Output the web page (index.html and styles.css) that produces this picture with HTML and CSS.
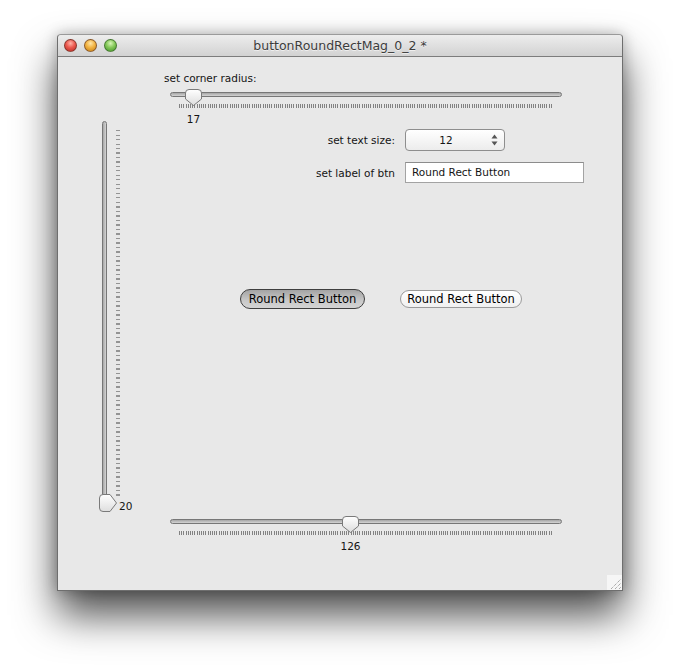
FILE: index.html
```html
<!doctype html>
<html>
    <head>
        <meta charset='utf-8'>
        <title>buttonRoundRectMag_0_2</title>
        <link rel="stylesheet" href="styles.css">
    </head>
    <body>
        <div class="window">
            <div class="titlebar">
                <div class="lights">
                    <span class="light red"></span>
                    <span class="light amber"></span>
                    <span class="light green"></span>
                </div>
                <div class="title">buttonRoundRectMag_0_2 *</div>
                <div></div>
            </div>
            <div class="content">
                <!-- vertical slider, left side -->
                <div class="side">
                    <div class="vslider">
                        <div class="vtrack"></div>
                        <div class="vticks"></div>
                        <div class="vthumb" style="top:373px">
                            <svg width="18" height="18" viewBox="0 0 18 18">
                                <defs>
                                    <linearGradient id="gv" x1="0" y1="0" x2="0" y2="1">
                                        <stop offset="0" stop-color="#ffffff"/>
                                        <stop offset="1" stop-color="#dedede"/>
                                    </linearGradient>
                                </defs>
                                <path d="M4 0.5 H11 L17.5 9 L11 17.5 H4 Q0.5 17.5 0.5 14 V4 Q0.5 0.5 4 0.5 Z" fill="url(#gv)" stroke="#7a7a7a"/>
                            </svg>
                            <span class="vvalue">20</span>
                        </div>
                    </div>
                </div>

                <div class="main">
                    <div class="caption">set corner radius:</div>
                    <div class="hslider">
                        <div class="track"></div>
                        <div class="ticks"></div>
                        <div class="thumb" style="left:15px">
                            <svg width="17" height="17" viewBox="0 0 17 17">
                                <defs>
                                    <linearGradient id="gh" x1="0" y1="0" x2="0" y2="1">
                                        <stop offset="0" stop-color="#ffffff"/>
                                        <stop offset="1" stop-color="#dcdcdc"/>
                                    </linearGradient>
                                </defs>
                                <path d="M0.5 4 Q0.5 0.5 4 0.5 H13 Q16.5 0.5 16.5 4 V10 L8.5 16.5 L0.5 10 Z" fill="url(#gh)" stroke="#7a7a7a"/>
                            </svg>
                            <span class="value">17</span>
                        </div>
                    </div>

                    <div class="form">
                        <label>set text size:</label>
                        <div class="spinner">
                            <span>12</span>
                            <svg width="7" height="12" viewBox="0 0 7 12">
                                <path d="M3.5 0.5 L6.5 4.5 H0.5 Z" fill="#555"/>
                                <path d="M3.5 11.5 L6.5 7.5 H0.5 Z" fill="#555"/>
                            </svg>
                        </div>
                        <label>set label of btn</label>
                        <div class="field">Round Rect Button</div>
                    </div>

                    <div class="buttons">
                        <button class="rr pressed">Round Rect Button</button>
                        <button class="rr plain">Round Rect Button</button>
                    </div>

                    <div class="hslider lower">
                        <div class="track"></div>
                        <div class="ticks"></div>
                        <div class="thumb" style="left:172px">
                            <svg width="17" height="17" viewBox="0 0 17 17">
                                <path d="M0.5 4 Q0.5 0.5 4 0.5 H13 Q16.5 0.5 16.5 4 V10 L8.5 16.5 L0.5 10 Z" fill="url(#gh)" stroke="#7a7a7a"/>
                            </svg>
                            <span class="value">126</span>
                        </div>
                    </div>
                </div>

                <div class="grip">
                    <svg width="15" height="15" viewBox="0 0 15 15">
                        <path d="M4 14 L14 4 M8 14 L14 8 M12 14 L14 12" stroke="#8a8a8a" stroke-width="1" stroke-dasharray="1 1"/>
                    </svg>
                </div>
            </div>
        </div>
    </body>
</html>
```

FILE: styles.css
```css
html, body {
    margin: 0;
    padding: 0;
}
body {
    min-height: 670px;
    background: #fff;
    font-family: 'DejaVu Sans', 'Liberation Sans', sans-serif;
    font-size: 10.5px;
    color: #141414;
}
.window {
    width: 564px;
    margin: 34px 0 0 57px;
    border: 1px solid #6e6e6e;
    border-top-color: #9a9a9a;
    border-radius: 4px 4px 0 0;
    background: #e8e8e8;
    box-shadow: 0 24px 42px rgba(0, 0, 0, 0.7), 0 0 14px rgba(0, 0, 0, 0.25);
}

/* title bar */
.titlebar {
    height: 21px;
    display: grid;
    grid-template-columns: 1fr auto 1fr;
    align-items: center;
    background: linear-gradient(#ededed, #d2d2d2);
    border-bottom: 1px solid #7c7c7c;
    border-radius: 4px 4px 0 0;
}
.lights {
    display: flex;
    gap: 7px;
    padding-left: 6px;
}
.light {
    width: 11px;
    height: 11px;
    border-radius: 50%;
    border: 1px solid rgba(80, 40, 30, 0.6);
}
.light.red {
    background: radial-gradient(circle at 50% 30%, #ffb3a8 0, #ec5a50 45%, #b72a22 100%);
}
.light.amber {
    background: radial-gradient(circle at 50% 30%, #ffe6a8 0, #f2b443 45%, #c47d14 100%);
}
.light.green {
    background: radial-gradient(circle at 50% 30%, #d8f5b8 0, #86c95a 45%, #43922a 100%);
    border-color: rgba(40, 80, 30, 0.6);
}
.title {
    font-size: 12.5px;
    color: #3c3c3c;
    text-shadow: 0 1px 0 rgba(255, 255, 255, 0.6);
}

/* content */
.content {
    position: relative;
    height: 533px;
    display: flex;
}
.side {
    width: 82px;
}
.main {
    width: 482px;
    padding-top: 14px;
}

/* vertical slider */
.vslider {
    position: relative;
    width: 40px;
    height: 391px;
    margin: 64px 0 0 44px;
}
.vtrack {
    position: absolute;
    left: 0;
    top: 0;
    bottom: 2px;
    width: 3px;
    border: 1px solid #777;
    border-radius: 3px;
    background: linear-gradient(90deg, #a6a6a6, #d4d4d4);
}
.vticks {
    position: absolute;
    left: 14px;
    top: 9px;
    bottom: 13px;
    width: 4px;
    background: repeating-linear-gradient(180deg, #949494 0 1px, transparent 1px 4.5px);
}
.vthumb {
    position: absolute;
    left: -3px;
    width: 18px;
    height: 18px;
}
.vthumb svg {
    display: block;
}
.vvalue {
    position: absolute;
    left: 20px;
    top: 5px;
    line-height: 14px;
}

/* horizontal slider */
.caption {
    margin-left: 24px;
    line-height: 14px;
}
.hslider {
    position: relative;
    display: flow-root;
    width: 392px;
    height: 26px;
    margin: 1px 0 0 30px;
}
.hslider.lower {
    margin-top: 204px;
}
.track {
    margin-top: 6px;
    height: 3px;
    border: 1px solid #777;
    border-radius: 3px;
    background: linear-gradient(#a6a6a6, #d4d4d4);
}
.ticks {
    margin: 7px 0 0 9px;
    width: 374px;
    height: 4px;
    background: repeating-linear-gradient(90deg, #828282 0 1px, transparent 1px 2.2px);
}
.thumb {
    position: absolute;
    top: 3px;
    width: 17px;
    height: 17px;
}
.thumb svg {
    display: block;
}
.value {
    position: absolute;
    left: 50%;
    top: 23px;
    transform: translateX(-50%);
    line-height: 14px;
}

/* form */
.form {
    display: grid;
    grid-template-columns: 255px auto;
    column-gap: 10px;
    row-gap: 11px;
    align-items: center;
    margin-top: 17px;
}
.form label {
    text-align: right;
}
.spinner {
    width: 98px;
    height: 20px;
    border: 1px solid #8e8e8e;
    border-radius: 4px;
    background: linear-gradient(#ffffff, #ececec);
    display: flex;
    align-items: center;
}
.spinner span {
    width: 80px;
    text-align: center;
}
.spinner svg {
    margin-left: 5px;
}
.field {
    width: 171px;
    height: 19px;
    line-height: 19px;
    padding-left: 6px;
    background: #fff;
    border: 1px solid #a3a3a3;
    border-top-color: #8c8c8c;
}

/* buttons */
.buttons {
    display: flex;
    align-items: flex-start;
    margin-top: 106px;
}
.rr {
    font-family: 'DejaVu Sans', 'Liberation Sans', sans-serif;
    font-size: 11.5px;
    color: #000;
    padding: 0;
    border-radius: 10px;
    box-sizing: border-box;
}
.rr.pressed {
    width: 125px;
    height: 20px;
    margin-left: 100px;
    border: 1px solid #3e3e3e;
    background: linear-gradient(#a4a4a4, #c9c9c9 60%, #d4d4d4);
}
.rr.plain {
    width: 122px;
    height: 18px;
    margin: 1px 0 0 35px;
    border: 1px solid #9a9a9a;
    background: linear-gradient(#ffffff, #f0f0f0);
}

/* resize grip */
.grip {
    position: absolute;
    right: 0;
    bottom: 0;
    width: 15px;
    height: 15px;
    background: #f6f6f6;
}
.grip svg {
    display: block;
}
```
